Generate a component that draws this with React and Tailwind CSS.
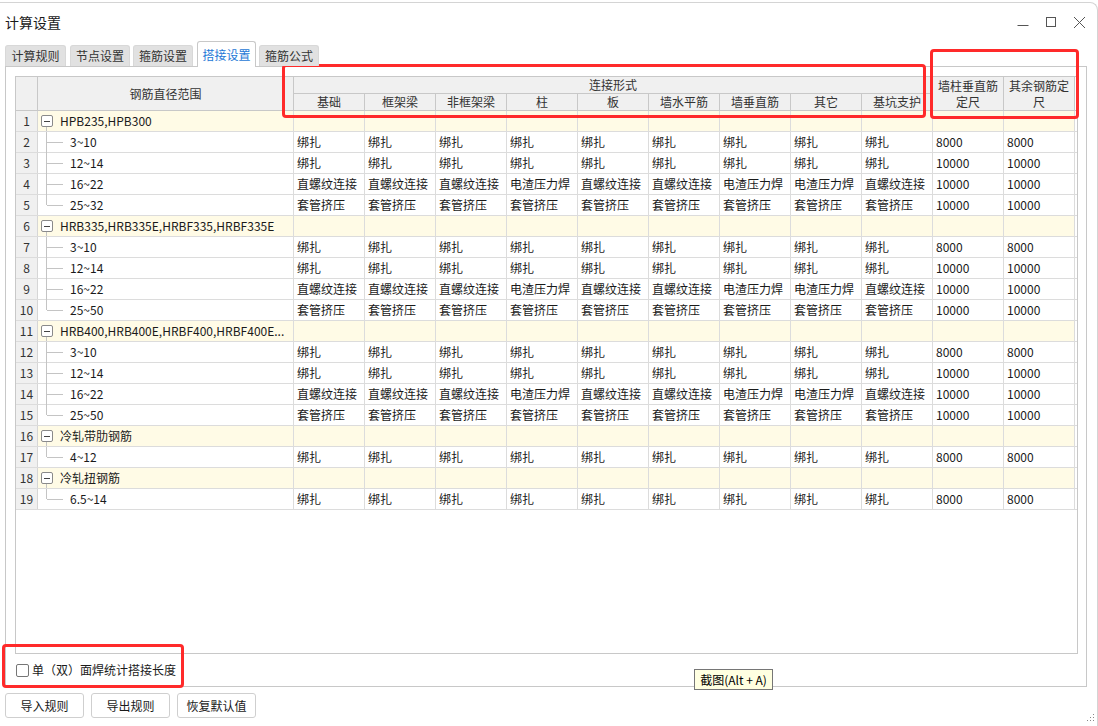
import React from "react";

const B = "绑扎";
const Z = "直螺纹连接";
const D = "电渣压力焊";
const T = "套管挤压";
const patterns = {
  b: [B, B, B, B, B, B, B, B, B],
  z: [Z, Z, Z, D, Z, Z, D, D, Z],
  t: [T, T, T, T, T, T, T, T, T],
};

const groups = [
  {
    n: 1,
    name: "HPB235,HPB300",
    rows: [
      [2, "3~10", "b", "8000"],
      [3, "12~14", "b", "10000"],
      [4, "16~22", "z", "10000"],
      [5, "25~32", "t", "10000"],
    ],
  },
  {
    n: 6,
    name: "HRB335,HRB335E,HRBF335,HRBF335E",
    rows: [
      [7, "3~10", "b", "8000"],
      [8, "12~14", "b", "10000"],
      [9, "16~22", "z", "10000"],
      [10, "25~50", "t", "10000"],
    ],
  },
  {
    n: 11,
    name: "HRB400,HRB400E,HRBF400,HRBF400E...",
    rows: [
      [12, "3~10", "b", "8000"],
      [13, "12~14", "b", "10000"],
      [14, "16~22", "z", "10000"],
      [15, "25~50", "t", "10000"],
    ],
  },
  { n: 16, name: "冷轧带肋钢筋", rows: [[17, "4~12", "b", "8000"]] },
  { n: 18, name: "冷轧扭钢筋", rows: [[19, "6.5~14", "b", "8000"]] },
];

const subHeads = ["基础", "框架梁", "非框架梁", "柱", "板", "墙水平筋", "墙垂直筋", "其它", "基坑支护"];

const tabs = [
  { label: "计算规则", cls: "ml-[5px] w-[61px]" },
  { label: "节点设置", cls: "ml-[4px] w-[60px]" },
  { label: "箍筋设置", cls: "ml-[3px] w-[60px]" },
  { label: "搭接设置", cls: "ml-[4px] w-[59px]", active: true },
  { label: "箍筋公式", cls: "ml-[3px] w-[60px]" },
];

function RowNum({ n }) {
  return (
    <div className="w-[22px] shrink-0 border-r border-[#d6d6d6] bg-[#f0f0f0] text-center text-[#333]">
      {n}
    </div>
  );
}

function GroupRow({ g }) {
  return (
    <div className="flex h-[21px] border-b border-[#dcdcdc] leading-[20px]">
      <RowNum n={g.n} />
      <div className="relative flex w-[256px] shrink-0 items-center border-r border-[#dcdcdc] bg-[#fffbe6] pl-[3px]">
        <div className="relative flex h-[12px] w-[12px] items-center justify-center rounded-[2px] border border-[#8a8a8a] bg-white">
          <div className="h-px w-[6px] bg-[#444]" />
        </div>
        <span className="ml-[7px] text-[#1a1a1a]">{g.name}</span>
        <span className="absolute left-[8px] top-[16px] bottom-0 w-px bg-[#c4c4c4]" />
      </div>
      {Array.from({ length: 11 }).map((_, i) => (
        <div key={i} className="w-[71px] shrink-0 border-r border-[#dcdcdc] bg-[#fffbe6]" />
      ))}
    </div>
  );
}

function ChildRow({ r, last }) {
  const vals = patterns[r[2]];
  return (
    <div className="flex h-[21px] border-b border-[#dcdcdc] leading-[20px] text-[#1a1a1a]">
      <RowNum n={r[0]} />
      <div className="relative w-[256px] shrink-0 border-r border-[#dcdcdc] bg-white pl-[32px]">
        {r[1]}
        <span className={last ? "absolute left-[8px] top-0 h-[10px] w-px bg-[#c4c4c4]" : "absolute left-[8px] top-0 h-[21px] w-px bg-[#c4c4c4]"} />
        <span className="absolute left-[9px] top-[10px] h-px w-[16px] bg-[#c4c4c4]" />
      </div>
      {vals.map((v, i) => (
        <div key={i} className="w-[71px] shrink-0 overflow-hidden whitespace-nowrap border-r border-[#dcdcdc] pl-[3px]">
          {v}
        </div>
      ))}
      <div className="w-[71px] shrink-0 border-r border-[#dcdcdc] pl-[3px]">{r[3]}</div>
      <div className="w-[71px] shrink-0 border-r border-[#dcdcdc] pl-[3px]">{r[3]}</div>
    </div>
  );
}

export default function App() {
  return (
    <div className="relative h-[726px] w-[1098px] overflow-hidden bg-white font-['Noto_Sans_CJK_SC',sans-serif] text-[12px] text-[#1a1a1a]">
      <div className="mt-[2px] flex h-[724px] flex-col rounded-tr-[8px] border-t border-r border-[#d4d4d4]">
        {/* Title bar */}
        <div className="flex h-[38px] shrink-0 items-center justify-between pl-[5px] pr-[4px]">
          <span className="text-[14px] text-[#1a1a1a]">计算设置</span>
          <div className="flex items-center">
            <div className="flex h-[28px] w-[28px] items-center justify-center">
              <svg width="12" height="12" viewBox="0 0 12 12">
                <line x1="0.5" y1="9.5" x2="11.5" y2="9.5" stroke="#555" strokeWidth="1" />
              </svg>
            </div>
            <div className="flex h-[28px] w-[28px] items-center justify-center">
              <svg width="12" height="12" viewBox="0 0 12 12">
                <rect x="1.5" y="1.5" width="9" height="9" fill="none" stroke="#555" strokeWidth="1" />
              </svg>
            </div>
            <div className="flex h-[28px] w-[28px] items-center justify-center">
              <svg width="13" height="13" viewBox="0 0 13 13">
                <path d="M1 1 L12 12 M12 1 L1 12" stroke="#555" strokeWidth="1" />
              </svg>
            </div>
          </div>
        </div>

        {/* Tabs */}
        <div className="relative z-10 flex h-[25px] shrink-0 items-end">
          {tabs.map((t) =>
            t.active ? (
              <div
                key={t.label}
                className={`${t.cls} flex h-[26px] -mb-px items-center justify-center rounded-t-[3px] border border-b-0 border-[#c8c8c8] bg-white text-[#1e78d6]`}
              >
                {t.label}
              </div>
            ) : (
              <div
                key={t.label}
                className={`${t.cls} flex h-[21px] items-center justify-center rounded-t-[3px] border border-b-0 border-[#d8d8d8] bg-[#e1e1e1] text-[#333]`}
              >
                {t.label}
              </div>
            )
          )}
        </div>

        {/* Panel */}
        <div className="ml-[5px] flex h-[621px] w-[1082px] shrink-0 flex-col border border-[#c8c8c8] px-[9px] pt-[9px]">
          <div className="h-[578px] w-[1063px] shrink-0 border border-[#c8c8c8] bg-white">
            {/* Header */}
            <div className="flex h-[34px] border-b border-[#c8c8c8] leading-[16px] text-[#333]">
              <div className="w-[22px] shrink-0 border-r border-[#c8c8c8] bg-[#f0f0f0]" />
              <div className="flex w-[256px] shrink-0 items-center justify-center border-r border-[#c8c8c8] bg-[#f0f0f0]">
                钢筋直径范围
              </div>
              <div className="flex w-[639px] shrink-0 flex-col bg-[#f0f0f0]">
                <div className="flex h-[17px] items-center justify-center border-r border-b border-[#c8c8c8]">连接形式</div>
                <div className="flex h-[16px]">
                  {subHeads.map((h) => (
                    <div key={h} className="flex w-[71px] shrink-0 items-center justify-center border-r border-[#c8c8c8]">
                      {h}
                    </div>
                  ))}
                </div>
              </div>
              <div className="flex w-[71px] shrink-0 flex-col items-center justify-center border-r border-[#c8c8c8] bg-[#f0f0f0] text-center">
                <span>墙柱垂直筋</span>
                <span>定尺</span>
              </div>
              <div className="flex w-[71px] shrink-0 flex-col items-center justify-center border-r border-[#c8c8c8] bg-[#f0f0f0] text-center">
                <span>其余钢筋定</span>
                <span>尺</span>
              </div>
            </div>
            {/* Body */}
            {groups.map((g) => (
              <React.Fragment key={g.n}>
                <GroupRow g={g} />
                {g.rows.map((r, i) => (
                  <ChildRow key={r[0]} r={r} last={i === g.rows.length - 1} />
                ))}
              </React.Fragment>
            ))}
          </div>
          <div className="flex h-[32px] items-center">
            <div className="ml-[1px] h-[13px] w-[13px] rounded-[2px] border border-[#767676] bg-white" />
            <span className="ml-[3px] text-[#1a1a1a]">单（双）面焊统计搭接长度</span>
          </div>
        </div>

        {/* Buttons */}
        <div className="mt-[6px] flex shrink-0">
          <button className="ml-[5px] h-[25px] w-[79px] rounded-[3px] border border-[#cfcfcf] bg-white text-[12px] text-[#1a1a1a]">导入规则</button>
          <button className="ml-[7px] h-[25px] w-[79px] rounded-[3px] border border-[#cfcfcf] bg-white text-[12px] text-[#1a1a1a]">导出规则</button>
          <button className="ml-[7px] h-[25px] w-[79px] rounded-[3px] border border-[#cfcfcf] bg-white text-[12px] text-[#1a1a1a]">恢复默认值</button>
        </div>
      </div>

      {/* Resize grip */}
      <svg className="absolute left-[1087px] top-[714px]" width="9" height="9" viewBox="0 0 9 9">
        <rect x="6" y="0" width="1" height="1" fill="#888" />
        <rect x="3" y="3" width="1" height="1" fill="#888" />
        <rect x="6" y="3" width="1" height="1" fill="#888" />
        <rect x="0" y="6" width="1" height="1" fill="#888" />
        <rect x="3" y="6" width="1" height="1" fill="#888" />
        <rect x="6" y="6" width="1" height="1" fill="#888" />
      </svg>

      {/* Tooltip */}
      <div className="absolute left-[694px] top-[669px] flex h-[21px] w-[79px] items-center justify-center border border-[#767676] bg-[#ffffe1] text-[12px] text-black">
        截图(Alt + A)
      </div>

      {/* Red annotation boxes */}
      <div className="pointer-events-none absolute left-[282px] top-[64px] h-[54px] w-[644px] rounded-[4px] border-[3px] border-[#ff2a2a]" />
      <div className="pointer-events-none absolute left-[930px] top-[49px] h-[70px] w-[149px] rounded-[4px] border-[3px] border-[#ff2a2a]" />
      <div className="pointer-events-none absolute left-[2px] top-[644px] h-[44px] w-[182px] rounded-[4px] border-[3px] border-[#ff2a2a]" />
    </div>
  );
}
